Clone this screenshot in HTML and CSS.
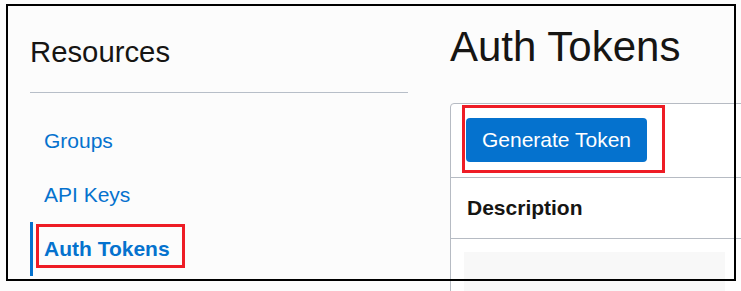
FILE: index.html
```html
<!DOCTYPE html>
<html lang="en">
<head>
<meta charset="utf-8">
<title>Auth Tokens</title>
<link rel="stylesheet" href="styles.css">
</head>
<body>
<div class="page">
  <aside class="sidebar">
    <h2 class="side-title">Resources</h2>
    <nav class="side-nav">
      <a class="nav-item" href="#">Groups</a>
      <a class="nav-item" href="#">API Keys</a>
      <a class="nav-item active" href="#">Auth Tokens<span class="annot annot-nav"></span></a>
    </nav>
  </aside>
  <main class="main">
    <h1 class="main-title">Auth Tokens</h1>
    <section class="card">
      <div class="toolbar">
        <button class="btn-primary" type="button">Generate Token</button>
        <span class="annot annot-btn"></span>
      </div>
      <div class="table-head">Description</div>
      <div class="table-body">
        <div class="placeholder"></div>
      </div>
    </section>
  </main>
</div>
<div class="frame"></div>
</body>
</html>
```

FILE: styles.css
```css
html, body {
  margin: 0;
  padding: 0;
}
body {
  width: 741px;
  height: 291px;
  overflow: hidden;
  background: #fcfcfc;
  font-family: "Liberation Sans", Arial, sans-serif;
  color: #161513;
  position: relative;
}
.page {
  display: flex;
  gap: 42px;
  padding-left: 30px;
}
.sidebar {
  width: 378px;
  flex: none;
  padding-top: 34px;
}
.side-title {
  margin: 0;
  font-size: 29.3px;
  font-weight: normal;
  line-height: 36px;
  padding-bottom: 22px;
  border-bottom: 1px solid #b7bec8;
}
.side-nav {
  display: flex;
  flex-direction: column;
  margin-top: 21px;
}
.nav-item {
  position: relative;
  display: block;
  height: 54px;
  line-height: 54px;
  padding-left: 14px;
  font-size: 21px;
  color: #0572ce;
  text-decoration: none;
}
.nav-item.active {
  font-weight: bold;
  padding-left: 11px;
  border-left: 3px solid #0572ce;
}
.annot {
  position: absolute;
  border: 3px solid #ee1c25;
  box-sizing: border-box;
  pointer-events: none;
}
.annot-nav {
  left: 3px;
  top: 2px;
  width: 149px;
  height: 44px;
}
.main {
  flex: none;
  width: 340px;
}
.main-title {
  margin: 23px 0 0;
  font-size: 42px;
  font-weight: normal;
  line-height: 48px;
}
.card {
  margin-top: 32px;
  background: #ffffff;
  border: 1px solid #b6bbc3;
  border-top-left-radius: 4px;
  height: 240px;
}
.toolbar {
  position: relative;
  padding: 14px 15px 15px;
  border-bottom: 1px solid #b6bbc3;
}
.btn-primary {
  display: block;
  width: 181px;
  height: 44px;
  padding: 0;
  border: none;
  border-radius: 4px;
  background: #0572ce;
  color: #ffffff;
  font-family: "Liberation Sans", Arial, sans-serif;
  font-size: 21px;
  line-height: 44px;
  text-align: center;
}
.annot-btn {
  left: 11px;
  top: 1px;
  width: 203px;
  height: 68px;
}
.table-head {
  height: 60px;
  line-height: 60px;
  padding-left: 16px;
  font-size: 21px;
  font-weight: bold;
  border-bottom: 1px solid #b6bbc3;
}
.table-body {
  padding: 13px 0 0 13px;
}
.placeholder {
  width: 261px;
  height: 60px;
  background: #f8f8f8;
}
.frame {
  position: absolute;
  left: 6px;
  top: 4px;
  width: 730px;
  height: 277px;
  box-sizing: border-box;
  border: 2px solid #000000;
  pointer-events: none;
}
```
